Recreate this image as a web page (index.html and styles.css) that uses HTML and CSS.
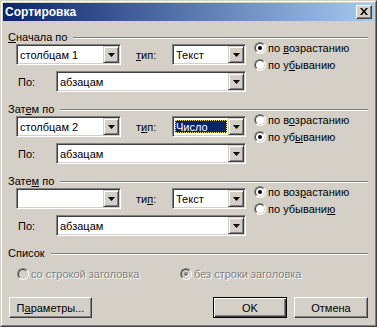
FILE: index.html
```html
<!DOCTYPE html>
<html lang="ru">
<head>
<meta charset="utf-8">
<title>Сортировка</title>
<link rel="stylesheet" href="styles.css">
</head>
<body>
<div class="window">
  <div class="frame">
    <div class="titlebar">
      <span class="title">Сортировка</span>
      <div class="close"><svg width="8" height="7" viewBox="0 0 8 7"><path d="M0 0h2l2 2.5L6 0h2L5 3.5 8 7H6L4 4.5 2 7H0l3-3.5z" fill="#000"/></svg></div>
    </div>
    <div class="content">
      <section class="group">
        <div class="group-head"><span><u>С</u>начала по</span><i class="rule"></i></div>
        <div class="group-body">
          <div class="fields">
            <div class="row">
              <div class="combo w-col"><span class="combo-text">столбцам 1</span><span class="drop"><svg width="7" height="4" viewBox="0 0 7 4"><path d="M0 0h7L3.5 4z" fill="#000"/></svg></span></div>
              <span class="lbl-type"><u>т</u>ип:</span>
              <div class="combo w-type"><span class="combo-text">Текст</span><span class="drop"><svg width="7" height="4" viewBox="0 0 7 4"><path d="M0 0h7L3.5 4z" fill="#000"/></svg></span></div>
            </div>
            <div class="row row-by">
              <span class="lbl-by">По:</span>
              <div class="combo w-by"><span class="combo-text">абзацам</span><span class="drop"><svg width="7" height="4" viewBox="0 0 7 4"><path d="M0 0h7L3.5 4z" fill="#000"/></svg></span></div>
            </div>
          </div>
          <div class="radios">
            <div class="opt"><span class="radio checked"></span><span>по <u>в</u>озрастанию</span></div>
            <div class="opt"><span class="radio"></span><span>по у<u>б</u>ыванию</span></div>
          </div>
        </div>
      </section>

      <section class="group">
        <div class="group-head"><span>Зат<u>е</u>м по</span><i class="rule"></i></div>
        <div class="group-body">
          <div class="fields">
            <div class="row">
              <div class="combo w-col"><span class="combo-text">столбцам 2</span><span class="drop"><svg width="7" height="4" viewBox="0 0 7 4"><path d="M0 0h7L3.5 4z" fill="#000"/></svg></span></div>
              <span class="lbl-type">т<u>и</u>п:</span>
              <div class="combo w-type"><span class="combo-text sel">Число</span><span class="drop"><svg width="7" height="4" viewBox="0 0 7 4"><path d="M0 0h7L3.5 4z" fill="#000"/></svg></span></div>
            </div>
            <div class="row row-by">
              <span class="lbl-by">По:</span>
              <div class="combo w-by"><span class="combo-text">абзацам</span><span class="drop"><svg width="7" height="4" viewBox="0 0 7 4"><path d="M0 0h7L3.5 4z" fill="#000"/></svg></span></div>
            </div>
          </div>
          <div class="radios">
            <div class="opt"><span class="radio"></span><span>по в<u>о</u>зрастанию</span></div>
            <div class="opt"><span class="radio checked"></span><span>по уб<u>ы</u>ванию</span></div>
          </div>
        </div>
      </section>

      <section class="group">
        <div class="group-head"><span>Зате<u>м</u> по</span><i class="rule"></i></div>
        <div class="group-body">
          <div class="fields">
            <div class="row">
              <div class="combo w-col"><span class="combo-text"></span><span class="drop"><svg width="7" height="4" viewBox="0 0 7 4"><path d="M0 0h7L3.5 4z" fill="#000"/></svg></span></div>
              <span class="lbl-type">ти<u>п</u>:</span>
              <div class="combo w-type"><span class="combo-text">Текст</span><span class="drop"><svg width="7" height="4" viewBox="0 0 7 4"><path d="M0 0h7L3.5 4z" fill="#000"/></svg></span></div>
            </div>
            <div class="row row-by">
              <span class="lbl-by">По:</span>
              <div class="combo w-by"><span class="combo-text">абзацам</span><span class="drop"><svg width="7" height="4" viewBox="0 0 7 4"><path d="M0 0h7L3.5 4z" fill="#000"/></svg></span></div>
            </div>
          </div>
          <div class="radios">
            <div class="opt"><span class="radio checked"></span><span>по воз<u>р</u>астанию</span></div>
            <div class="opt"><span class="radio"></span><span>по убывани<u>ю</u></span></div>
          </div>
        </div>
      </section>

      <section class="group list-group">
        <div class="group-head"><span>Список</span><i class="rule"></i></div>
        <div class="list-opts">
          <div class="opt disabled first"><span class="radio"></span><span>со строкой заголовка</span></div>
          <div class="opt disabled"><span class="radio checked"></span><span>без строки заголовка</span></div>
        </div>
      </section>

      <div class="buttons">
        <div class="btn btn-params">П<u>а</u>раметры...</div>
        <div class="btn btn-ok">OK</div>
        <div class="btn btn-cancel">Отмена</div>
      </div>
    </div>
  </div>
</div>
</body>
</html>
```

FILE: styles.css
```css
* { box-sizing: border-box; }
html, body { margin: 0; padding: 0; background: #d4d0c8; }
body {
  font-family: "Liberation Sans", Arial, sans-serif;
  font-size: 11px;
  color: #000;
}
u { text-decoration: underline; text-underline-offset: 1px; }

.window {
  width: 377px;
  height: 327px;
  border: 1px solid;
  border-color: #d4d0c8 #404040 #404040 #d4d0c8;
  background: #d4d0c8;
}
.frame {
  height: 100%;
  border: 1px solid;
  border-color: #fff #808080 #808080 #fff;
  padding: 1px;
  display: flex;
  flex-direction: column;
}

.titlebar {
  height: 18px;
  flex: none;
  background: linear-gradient(to right, #0a246a, #a6caf0);
  display: flex;
  align-items: center;
  padding: 0 2px 0 2px;
}
.title {
  color: #fff;
  font-weight: bold;
  font-size: 12px;
  flex: 1;
  line-height: 18px;
}
.close {
  width: 16px;
  height: 14px;
  background: #d4d0c8;
  border: 1px solid;
  border-color: #fff #404040 #404040 #fff;
  box-shadow: inset -1px -1px 0 #808080;
  display: flex;
  align-items: center;
  justify-content: center;
  padding-bottom: 1px;
}

.content {
  flex: 1;
  padding: 10px 6px 0 5px;
}

.group + .group { margin-top: 11px; }
.group-head {
  display: flex;
  align-items: center;
  height: 13px;
  line-height: 13px;
}
.rule {
  flex: 1;
  height: 2px;
  margin-left: 6px;
  border-top: 1px solid #808080;
  border-bottom: 1px solid #fff;
}

.group-body {
  display: flex;
  margin-left: 8px;
}
.row { display: flex; align-items: center; height: 21px; }
.row-by { margin-top: 6px; }

.combo {
  height: 21px;
  display: flex;
  border: 1px solid;
  border-color: #808080 #fff #fff #808080;
  box-shadow: inset 1px 1px 0 #404040, inset -1px -1px 0 #d4d0c8;
  background: #fff;
  padding: 2px;
}
.w-col { width: 105px; }
.w-type { width: 74px; }
.w-by { width: 190px; }
.combo-text {
  flex: 1;
  line-height: 15px;
  padding-left: 1px;
  margin: 1px 1px 1px 0;
  white-space: nowrap;
  overflow: hidden;
}
.combo-text.sel {
  background: #0a246a;
  color: #fff;
  outline: 1px dotted #f0e070;
  outline-offset: -1px;
}
.drop {
  width: 16px;
  height: 17px;
  margin: -1px -1px -1px 0;
  flex: none;
  background: #d4d0c8;
  border: 1px solid;
  border-color: #d4d0c8 #404040 #404040 #d4d0c8;
  box-shadow: inset 1px 1px 0 #fff, inset -1px -1px 0 #808080;
  display: flex;
  align-items: center;
  justify-content: center;
}
.lbl-type { margin-left: 15px; width: 36px; }
.lbl-by { padding-left: 2px; width: 40px; }

.radios {
  margin-left: 8px;
  margin-top: -5px;
}
.opt {
  display: flex;
  align-items: center;
  height: 17px;
  white-space: nowrap;
}
.radio {
  width: 12px;
  height: 12px;
  flex: none;
  margin-right: 2px;
  border-radius: 50%;
  border: 1px solid;
  border-color: #808080 #fff #fff #808080;
  background: #fff;
  position: relative;
}
.radio::before {
  content: "";
  position: absolute;
  inset: 0;
  border-radius: 50%;
  border: 1px solid;
  border-color: #404040 #d4d0c8 #d4d0c8 #404040;
}
.radio.checked::after {
  content: "";
  position: absolute;
  left: 3px;
  top: 3px;
  width: 4px;
  height: 4px;
  border-radius: 50%;
  background: #000;
}

.list-opts {
  display: flex;
  margin-top: 5px;
  padding-left: 9px;
}
.list-opts .first { width: 163px; }
.opt.disabled { color: #808080; text-shadow: 1px 1px 0 #fff; }
.opt.disabled .radio { background: #d4d0c8; }
.opt.disabled .radio.checked::after { background: #808080; box-shadow: 1px 1px 0 #fff; }

.buttons {
  display: flex;
  margin-top: 15px;
  padding-left: 1px;
}
.btn {
  height: 21px;
  display: flex;
  align-items: center;
  justify-content: center;
  border: 1px solid;
  border-color: #fff #404040 #404040 #fff;
  box-shadow: inset -1px -1px 0 #808080;
  background: #d4d0c8;
}
.btn-params { width: 83px; }
.btn-ok {
  width: 74px;
  margin-left: auto;
  border-color: #000;
  box-shadow: inset 1px 1px 0 #fff, inset -1px -1px 0 #404040, inset -2px -2px 0 #808080;
}
.btn-cancel { width: 74px; margin-left: 7px; }
```
